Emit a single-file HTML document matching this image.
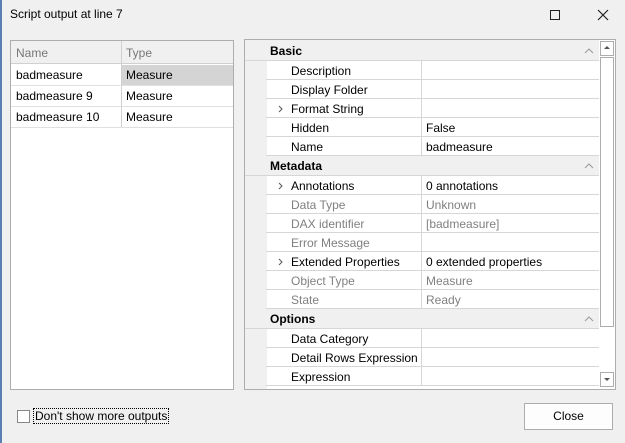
<!DOCTYPE html><html><head><style>
*{box-sizing:border-box;margin:0;padding:0}
body{width:625px;height:443px;background:#f0f0f0;font-family:"Liberation Sans",sans-serif;font-size:12px;color:#000;position:relative;overflow:hidden}
.a{position:absolute}
.t{white-space:nowrap}
</style></head><body>
<div class="a" style="left:0;top:0;width:2px;height:443px;background:#5a7fb5"></div>
<div class="a t" style="left:10px;top:7px;font-size:12px">Script output at line 7</div>
<div class="a" style="left:550px;top:10px;width:10px;height:10px;border:1px solid #222"></div>
<svg class="a" style="left:597px;top:9px" width="12" height="12"><path d="M1 1L11 11M11 1L1 11" stroke="#222" stroke-width="1.2"/></svg>

<div class="a" style="left:10px;top:40px;width:224px;height:350px;background:#fff;border:1px solid #adadad"></div>
<div class="a" style="left:11px;top:41px;width:222px;height:23px;background:#f0f0f0;border-bottom:1px solid #d0d0d0"></div>
<div class="a" style="left:121px;top:41px;width:1px;height:86px;background:#d0d0d0"></div>
<div class="a t" style="left:16px;top:46px;color:#777">Name</div>
<div class="a t" style="left:126px;top:46px;color:#777">Type</div>
<div class="a" style="left:122px;top:65px;width:111px;height:20px;background:#d4d4d4"></div>
<div class="a" style="left:11px;top:85px;width:222px;height:1px;background:#e0e0e0"></div>
<div class="a" style="left:11px;top:106px;width:222px;height:1px;background:#e0e0e0"></div>
<div class="a" style="left:11px;top:127px;width:222px;height:1px;background:#e0e0e0"></div>
<div class="a t" style="left:16px;top:68px">badmeasure</div><div class="a t" style="left:126px;top:68px">Measure</div>
<div class="a t" style="left:16px;top:89px">badmeasure 9</div><div class="a t" style="left:126px;top:89px">Measure</div>
<div class="a t" style="left:16px;top:110px">badmeasure 10</div><div class="a t" style="left:126px;top:110px">Measure</div>

<div class="a" style="left:244px;top:39px;width:372px;height:351px;background:#f0f0f0;border:1px solid #adadad;overflow:hidden">
<div class="a" style="left:22px;top:1px;width:333px;height:350px;background:#fff"></div>
</div>
<div id="rows"></div>
<div class="a" style="left:599px;top:40px;width:16px;height:349px;background:#fff"></div>
<div class="a" style="left:600px;top:41px;width:14px;height:15px;border:1px solid #adadad;background:#fff"></div>
<svg class="a" style="left:603px;top:45px" width="8" height="6"><path d="M1 4L4 1L7 4Z" fill="#555"/></svg>
<div class="a" style="left:600px;top:57px;width:14px;height:270px;border:1px solid #adadad;background:#fff"></div>
<div class="a" style="left:600px;top:372px;width:14px;height:15px;border:1px solid #adadad;background:#fff"></div>
<svg class="a" style="left:603px;top:377px" width="8" height="6"><path d="M1 1L7 1L4 4Z" fill="#555"/></svg>

<div class="a" style="left:17px;top:410px;width:13px;height:13px;border:1px solid #888;background:#fff"></div>
<div class="a t" style="left:33px;top:408px;border:1px dotted #000;padding:0 1px;line-height:14px">Don't show more outputs</div>
<div class="a" style="left:524px;top:403px;width:89px;height:27px;border:1px solid #adadad;background:#fdfdfd;text-align:center;line-height:25px">Close</div>

<script>
var R=[["c","Basic"],["","Description",""],["","Display Folder",""],[">","Format String",""],["","Hidden","False"],["","Name","badmeasure"],
["c","Metadata"],[">","Annotations","0 annotations"],["d","Data Type","Unknown"],["d","DAX identifier","[badmeasure]"],["d","Error Message",""],[">","Extended Properties","0 extended properties"],["d","Object Type","Measure"],["d","State","Ready"],
["c","Options"],["","Data Category",""],["","Detail Rows Expression",""],["","Expression",""]];
var h="",y=41;
R.forEach(function(r){
if(r[0]=="c"){h+='<div class="a" style="left:245px;top:'+y+'px;width:354px;height:20px;background:#f0f0f0;border-bottom:1px solid #d6d6d6"></div><div class="a t" style="left:270px;top:'+(y+3)+'px;font-weight:bold">'+r[1]+'</div><svg class="a" style="left:584px;top:'+(y+7)+'px" width="10" height="6"><path d="M1 5L5 1L9 5" stroke="#999" fill="none"/></svg>';y+=20;}
else{var c=r[0]=="d"?"#808080":"#000";
h+='<div class="a" style="left:266px;top:'+(y+18)+'px;width:333px;height:1px;background:#d6d6d6"></div><div class="a" style="left:421px;top:'+y+'px;width:1px;height:19px;background:#d6d6d6"></div><div class="a t" style="left:291px;top:'+(y+3)+'px;color:'+c+'">'+r[1]+'</div><div class="a t" style="left:426px;top:'+(y+3)+'px;color:'+c+'">'+r[2]+'</div>';
if(r[0]==">")h+='<svg class="a" style="left:278px;top:'+(y+6)+'px" width="6" height="8"><path d="M1 1L4 4L1 7" stroke="#555" fill="none"/></svg>';y+=19;}
});
document.getElementById("rows").innerHTML=h;
</script>
</body></html>
